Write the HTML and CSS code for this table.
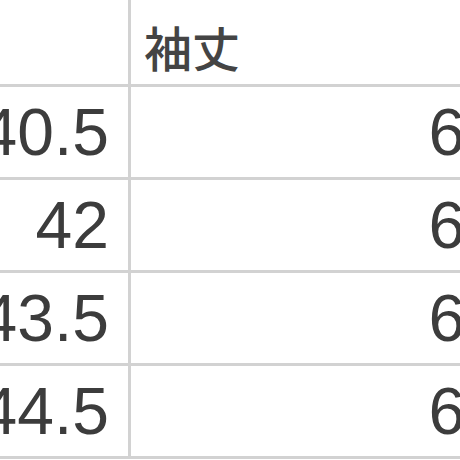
FILE: index.html
```html
<!DOCTYPE html>
<html lang="ja">
<head>
<meta charset="utf-8">
<link rel="stylesheet" href="styles.css">
</head>
<body>
<div class="sheet">
  <div class="cell head"></div>
  <div class="cell head label">袖丈</div>
  <div class="cell num">40.5</div>
  <div class="cell num wide">64</div>
  <div class="cell num">42</div>
  <div class="cell num wide">65</div>
  <div class="cell num">43.5</div>
  <div class="cell num wide">66</div>
  <div class="cell num">44.5</div>
  <div class="cell num wide">67</div>
</div>
</body>
</html>
```
FILE: styles.css
```css
html, body {
  margin: 0;
  padding: 0;
  background: #ffffff;
  overflow: hidden;
  width: 460px;
  height: 460px;
}
.sheet {
  display: grid;
  grid-template-columns: 201px 400px;
  grid-template-rows: 87px repeat(4, 93px);
  margin-left: -70px;
  font-family: "Liberation Sans", Arial, "Noto Sans CJK JP", sans-serif;
  color: #3c3c3c;
}
.cell {
  border-right: 3px solid #d2d2d2;
  border-bottom: 3px solid #d2d2d2;
  display: flex;
  align-items: center;
  overflow: hidden;
}
.head.label {
  font-family: "Noto Sans CJK JP", sans-serif;
  font-size: 48px;
  font-weight: 500;
  color: #444444;
  padding-left: 13px;
  padding-top: 8px;
}
.num {
  font-size: 66px;
  justify-content: flex-end;
  padding-right: 19px;
  white-space: nowrap;
}
.num.wide {
  padding-right: 26px;
}
```
